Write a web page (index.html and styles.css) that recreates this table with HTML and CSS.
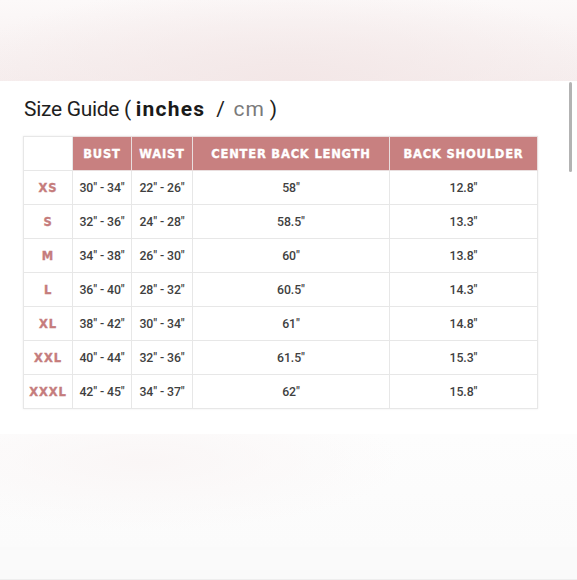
FILE: index.html
```html
<!DOCTYPE html>
<html>
<head>
<meta charset="utf-8">
<link rel="stylesheet" href="styles.css">
</head>
<body>
<div class="top-band"></div>
<main class="panel">
  <h1 class="title">Size Guide ( <b class="unit-on">inches</b> <span class="slash">/</span> <span class="unit-off">cm</span> )</h1>
  <table class="guide">
    <thead>
      <tr>
        <th class="blank"></th>
        <th class="c-bust">BUST</th>
        <th class="c-waist">WAIST</th>
        <th class="c-cbl">CENTER BACK LENGTH</th>
        <th class="c-bs">BACK SHOULDER</th>
      </tr>
    </thead>
    <tbody>
      <tr><td class="size">XS</td><td>30" - 34"</td><td>22" - 26"</td><td>58"</td><td>12.8"</td></tr>
      <tr><td class="size">S</td><td>32" - 36"</td><td>24" - 28"</td><td>58.5"</td><td>13.3"</td></tr>
      <tr><td class="size">M</td><td>34" - 38"</td><td>26" - 30"</td><td>60"</td><td>13.8"</td></tr>
      <tr><td class="size">L</td><td>36" - 40"</td><td>28" - 32"</td><td>60.5"</td><td>14.3"</td></tr>
      <tr><td class="size">XL</td><td>38" - 42"</td><td>30" - 34"</td><td>61"</td><td>14.8"</td></tr>
      <tr><td class="size">XXL</td><td>40" - 44"</td><td>32" - 36"</td><td>61.5"</td><td>15.3"</td></tr>
      <tr><td class="size">XXXL</td><td>42" - 45"</td><td>34" - 37"</td><td>62"</td><td>15.8"</td></tr>
    </tbody>
  </table>
  <div class="scrollbar"></div>
</main>
<div class="bottom-band"></div>
<div class="footer-band"></div>
</body>
</html>
```

FILE: styles.css
```css
html, body {
  margin: 0;
  padding: 0;
  background: #ffffff;
  width: 577px;
  height: 580px;
  overflow: hidden;
}

.top-band {
  height: 81px;
  background:
    radial-gradient(ellipse 60% 120% at 50% 100%, #f3e7e7 0%, rgba(243,231,231,0) 100%),
    linear-gradient(180deg, #fcf9f9 0%, #f6eeee 100%);
}

.panel {
  position: relative;
  background: #ffffff;
  height: 353px;
  padding: 0 0 0 23px;
  box-sizing: border-box;
}

.title {
  margin: 0;
  padding-top: 16px;
  height: 55px;
  box-sizing: border-box;
  font-family: Roboto, "Liberation Sans", sans-serif;
  font-weight: 400;
  font-size: 21px;
  color: #1e1e1e;
  letter-spacing: -0.3px;
  white-space: pre;
  padding-left: 1px;
}

.unit-on {
  font-weight: 700;
  letter-spacing: 1.2px;
  color: #1a1a1a;
}

.slash {
  color: #222;
  margin: 0 4px 0 6px;
}

.unit-off {
  color: #7a7a7a;
  letter-spacing: 1px;
}

.guide {
  border-collapse: collapse;
  width: 514px;
  table-layout: fixed;
  box-shadow: 0 0 2px rgba(0,0,0,0.08);
}

.guide th, .guide td {
  border: 1.5px solid #e7e7e7;
  height: 34px;
  padding: 0;
  text-align: center;
  box-sizing: border-box;
}

.guide th {
  background: #c88080;
  color: #ffffff;
  font-family: "DejaVu Sans", sans-serif;
  font-weight: 700;
  font-size: 11.5px;
  letter-spacing: 0.8px;
  -webkit-text-stroke: 0.35px #ffffff;
  border-color: #e9dede;
}

.guide th.blank {
  background: #ffffff;
  border-color: #e7e7e7;
  width: 49px;
}

.c-bust { width: 59px; }
.c-waist { width: 61px; }
.c-cbl { width: 197px; }
.c-bs { width: 148px; }

.guide td {
  font-family: Roboto, "Liberation Sans", sans-serif;
  font-weight: 500;
  font-size: 12.3px;
  color: #3f3f3f;
  letter-spacing: -0.1px;
}

.guide td.size {
  font-family: "DejaVu Sans", sans-serif;
  font-weight: 700;
  font-size: 11.5px;
  color: #c57c7c;
  letter-spacing: 0.9px;
  -webkit-text-stroke: 0.35px #c57c7c;
}

.scrollbar {
  position: absolute;
  right: 5px;
  top: 1px;
  width: 3px;
  height: 90px;
  background: #b3b3b3;
  border-radius: 2px;
}

.bottom-band {
  height: 113px;
  background:
    radial-gradient(ellipse 45% 60% at 25% 25%, #faf6f6 0%, rgba(250,246,246,0) 100%),
    linear-gradient(180deg, #fdfdfd 0%, #fbfbfb 100%);
}

.footer-band {
  height: 32px;
  background: #fafafa;
  border-bottom: 1px solid #eeeeee;
}
```
